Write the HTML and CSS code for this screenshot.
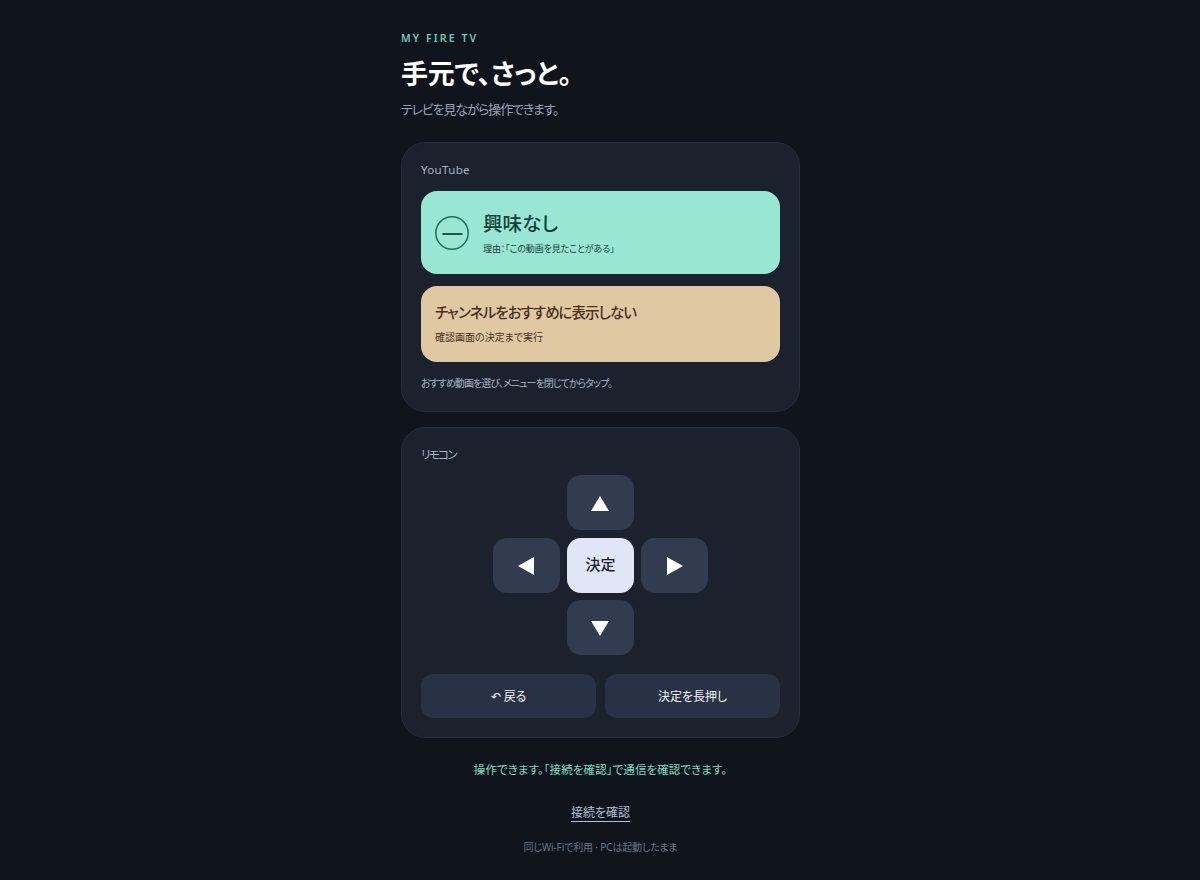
FILE: index.html
```html
<!DOCTYPE html>
<html lang="ja">
<head>
<meta charset="utf-8">
<title>MY FIRE TV</title>
<link rel="stylesheet" href="styles.css">
</head>
<body>
<main class="app">
  <header class="head">
    <p class="eyebrow">MY FIRE TV</p>
    <h1 class="title">手元で、さっと。</h1>
    <p class="sub">テレビを見ながら操作できます。</p>
  </header>
  <section class="card card-yt">
    <p class="card-label">YouTube</p>
    <button class="action action-mint">
      <span class="minus-icon"><svg viewBox="0 0 34 34" width="34" height="34"><circle cx="17" cy="17" r="16.2" fill="none" stroke="#1f6b5a" stroke-width="1.5"/><path d="M7.5 18H27.5" stroke="#12423a" stroke-width="1.8"/></svg></span>
      <span class="action-text">
        <span class="mint-title">興味なし</span>
        <span class="mint-sub">理由：「この動画を見たことがある」</span>
      </span>
    </button>
    <button class="action action-tan">
      <span class="tan-title">チャンネルをおすすめに表示しない</span>
      <span class="tan-sub">確認画面の決定まで実行</span>
    </button>
    <p class="note">おすすめ動画を選び、メニューを閉じてからタップ。</p>
  </section>
  <section class="card card-remote">
    <p class="card-label card-label-jp">リモコン</p>
    <div class="dpad">
      <button class="key key-up"><svg viewBox="0 0 18 15" width="18" height="15"><path d="M9 0L18 15H0Z" fill="#fff"/></svg></button>
      <button class="key key-left"><svg viewBox="0 0 16 18" width="16" height="18"><path d="M0 9L16 0V18Z" fill="#fff"/></svg></button>
      <button class="key key-ok">決定</button>
      <button class="key key-right"><svg viewBox="0 0 16 18" width="16" height="18"><path d="M16 9L0 0V18Z" fill="#fff"/></svg></button>
      <button class="key key-down"><svg viewBox="0 0 18 15" width="18" height="15"><path d="M9 15L18 0H0Z" fill="#fff"/></svg></button>
    </div>
    <div class="pair">
      <button class="wide">↶ 戻る</button>
      <button class="wide">決定を長押し</button>
    </div>
  </section>
  <p class="status">操作できます。「接続を確認」で通信を確認できます。</p>
  <div class="link-row"><a class="check" href="#">接続を確認</a></div>
  <p class="foot">同じWi-Fiで利用 · PCは起動したまま</p>
</main>
</body>
</html>
```
FILE: styles.css
```css
* { box-sizing: border-box; }
html, body { margin: 0; padding: 0; }
body {
  background: #0f141d;
  color: #fff;
  font-family: "Noto Sans", "Noto Sans CJK JP", sans-serif;
  font-feature-settings: "palt";
  height: 880px;
  overflow: hidden;
}
p { margin: 0; }
.app { width: 400px; margin: 0 auto; padding-top: 31px; padding-left: 1px; }
.eyebrow { font-size: 10.5px; line-height: 14px; letter-spacing: 0.2em; color: #72c8b6; font-weight: 600; }
.title { margin: 9px 0 0; font-size: 27px; line-height: 40px; font-weight: 700; color: #fff; letter-spacing: -0.25px; }
.sub { margin-top: 5px; font-size: 13px; line-height: 20px; color: #98a2b3; letter-spacing: -1.2px; }
.card {
  background: #1b222e;
  border: 1px solid #262e3c;
  border-radius: 24px;
  padding: 19px;
}
.card-yt { margin-top: 23px; height: 270px; }
.card-remote { margin-top: 15px; height: 311px; }
.card-label { font-size: 11.5px; line-height: 16px; color: #aab4c4; letter-spacing: 0.03em; }
.card-label-jp { letter-spacing: -1.6px; }
.action {
  display: flex;
  width: 100%;
  border: 0;
  border-radius: 16px;
  font-family: inherit;
  font-feature-settings: inherit;
  text-align: left;
  padding: 0 14px;
}
.action-mint { margin-top: 13px; height: 83px; align-items: center; gap: 14px; background: #98e6d3; color: #12423a; }
.minus-icon { display: block; width: 34px; height: 34px; margin-top: 1px; }
.minus-icon svg { display: block; }
.action-text { display: flex; flex-direction: column; }
.mint-title { font-size: 19.5px; line-height: 28px; font-weight: 500; color: #12423a; letter-spacing: 0.1px; }
.mint-sub { margin-top: 4px; font-size: 9px; line-height: 14px; color: #12423a; letter-spacing: -0.1px; }
.action-tan { margin-top: 12px; height: 76px; flex-direction: column; justify-content: center; background: #e0c8a2; color: #46301a; }
.tan-title { font-size: 14.5px; line-height: 22px; font-weight: 500; margin-top: -3px; letter-spacing: -0.95px; }
.tan-sub { margin-top: 7px; font-size: 10px; line-height: 15px; }
.note { margin-top: 13px; font-size: 10px; line-height: 16px; color: #aab4c4; letter-spacing: -0.95px; }
.dpad {
  display: grid;
  grid-template-columns: repeat(3, 67px);
  grid-template-rows: 55px 55px 55px;
  gap: 7.5px 7px;
  justify-content: center;
  margin-top: 12px;
}
.key {
  display: flex;
  align-items: center;
  justify-content: center;
  border: 0;
  border-radius: 14px;
  background: #323c51;
  padding: 2px 0 0;
  font-family: inherit;
}
.key-up { grid-column: 2; grid-row: 1; padding-right: 1px; }
.key-left { grid-column: 1; grid-row: 2; padding-right: 2px; }
.key-ok { grid-column: 2; grid-row: 2; background: #e0e6f5; color: #1a2230; font-size: 15px; font-weight: 500; padding: 0 0 3px; }
.key-right { grid-column: 3; grid-row: 2; }
.key-down { grid-column: 2; grid-row: 3; padding-right: 1px; }
.pair { display: grid; grid-template-columns: 1fr 1fr; gap: 9px; margin-top: 19px; }
.wide {
  height: 44px;
  border: 0;
  border-radius: 12px;
  background: #293244;
  color: #f2f4f8;
  font-family: inherit;
  font-feature-settings: inherit;
  font-size: 12px;
  font-weight: 400;
  padding: 0;
}
.status { margin-top: 23px; text-align: center; font-size: 11.5px; line-height: 18px; color: #7fdcc4; letter-spacing: 0.1px; }
.link-row { margin-top: 24px; text-align: center; line-height: 16px; }
.check { font-size: 12px; color: #b4c0d4; text-decoration: none; border-bottom: 1px solid #b4c0d4; }
.foot { margin-top: 18px; text-align: center; font-size: 10px; line-height: 16px; color: #6b7484; letter-spacing: -0.15px; }
```
